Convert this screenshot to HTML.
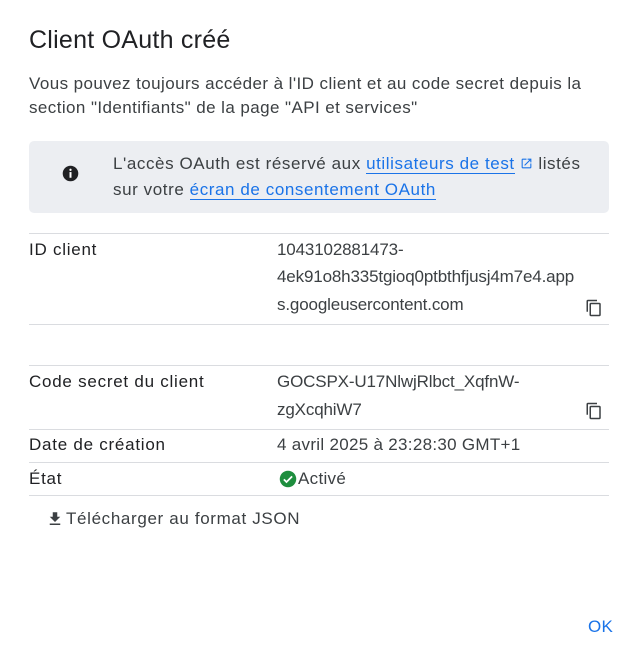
<!DOCTYPE html>
<html><head><meta charset="utf-8"><style>
*{margin:0;padding:0;box-sizing:border-box}
body{width:638px;height:656px;background:#fff;font-family:"Liberation Sans",Arial,sans-serif;color:#3c4043;position:relative;overflow:hidden}
.a{position:absolute;white-space:nowrap;font-size:17px;line-height:24px;letter-spacing:0.75px}
.v{letter-spacing:-0.15px}
.hr{position:absolute;left:29px;width:580px;height:1px;background:#dadce0}
.lbl{color:#202124}
a{color:#1a73e8;text-decoration:none;border-bottom:1px solid #1a73e8}
</style></head><body>
<div class="a" style="left:29px;top:25px;font-size:25px;line-height:30px;color:#202124;letter-spacing:0.25px">Client OAuth créé</div>
<div class="a" style="left:29px;top:72px;letter-spacing:0.42px">Vous pouvez toujours accéder à l'ID client et au code secret depuis la</div>
<div class="a" style="left:29px;top:96px;letter-spacing:0.42px">section "Identifiants" de la page "API et services"</div>
<div style="position:absolute;left:29px;top:141px;width:580px;height:72px;background:#eceef2;border-radius:5px"></div>
<svg style="position:absolute;left:62px;top:165px" width="17" height="17" viewBox="0 0 24 24"><circle cx="12" cy="12" r="11" fill="#202124"/><rect x="10.6" y="10" width="2.8" height="8" fill="#fff"/><circle cx="12" cy="6.8" r="1.6" fill="#fff"/></svg>
<div class="a" style="left:113px;top:152px;letter-spacing:0.58px">L'accès OAuth est réservé aux <a>utilisateurs de test</a> <svg width="13" height="13" viewBox="0 0 24 24" style="vertical-align:-1px"><path d="M19 19H5V5h7V3H5a2 2 0 0 0-2 2v14a2 2 0 0 0 2 2h14a2 2 0 0 0 2-2v-7h-2v7zM14 3v2h3.6l-9.8 9.8 1.4 1.4L19 6.4V10h2V3h-7z" fill="#1a73e8"/></svg> listés</div>
<div class="a" style="left:113px;top:178px;letter-spacing:0.58px">sur votre <a>écran de consentement OAuth</a></div>
<div class="hr" style="top:233px"></div>
<div class="a lbl" style="left:29px;top:238px">ID client</div>
<div class="a v" style="left:277px;top:238px">1043102881473-</div>
<div class="a v" style="left:277px;top:265px">4ek91o8h335tgioq0ptbthfjusj4m7e4.app</div>
<div class="a v" style="left:277px;top:293px">s.googleusercontent.com</div>
<svg style="position:absolute;left:585px;top:298px" width="18" height="20" viewBox="0 0 24 24"><path d="M16 1H4a2 2 0 0 0-2 2v14h2V3h12V1zm3 4H8a2 2 0 0 0-2 2v14a2 2 0 0 0 2 2h11a2 2 0 0 0 2-2V7a2 2 0 0 0-2-2zm0 16H8V7h11v14z" fill="#3c4043"/></svg>
<div class="hr" style="top:324px"></div>
<div class="hr" style="top:365px"></div>
<div class="a lbl" style="left:29px;top:370px">Code secret du client</div>
<div class="a v" style="left:277px;top:370px">GOCSPX-U17NlwjRlbct_XqfnW-</div>
<div class="a v" style="left:277px;top:398px">zgXcqhiW7</div>
<svg style="position:absolute;left:585px;top:401px" width="18" height="20" viewBox="0 0 24 24"><path d="M16 1H4a2 2 0 0 0-2 2v14h2V3h12V1zm3 4H8a2 2 0 0 0-2 2v14a2 2 0 0 0 2 2h11a2 2 0 0 0 2-2V7a2 2 0 0 0-2-2zm0 16H8V7h11v14z" fill="#3c4043"/></svg>
<div class="hr" style="top:429px"></div>
<div class="a lbl" style="left:29px;top:433px">Date de création</div>
<div class="a" style="left:277px;top:433px;letter-spacing:0.3px">4 avril 2025 à 23:28:30 GMT+1</div>
<div class="hr" style="top:462px"></div>
<div class="a lbl" style="left:29px;top:467px">État</div>
<svg style="position:absolute;left:279px;top:470px" width="18" height="18" viewBox="0 0 24 24"><circle cx="12" cy="12" r="11" fill="#1e8e3e"/><path d="M6.5 12.5l3.5 3.5 7.5-7.5" stroke="#fff" stroke-width="2.4" fill="none"/></svg>
<div class="a" style="left:298px;top:467px;letter-spacing:0.3px">Activé</div>
<div class="hr" style="top:495px"></div>
<svg style="position:absolute;left:46px;top:510px" width="18" height="18" viewBox="0 0 24 24"><path d="M19 9h-4V3H9v6H5l7 7 7-7zM5 18v2h14v-2H5z" fill="#3c4043"/></svg>
<div class="a" style="left:66px;top:507px;color:#3c4043;letter-spacing:0.65px">Télécharger au format JSON</div>
<div class="a" style="left:588px;top:615px;color:#1a73e8;font-size:17px;letter-spacing:0.3px">OK</div>
</body></html>
